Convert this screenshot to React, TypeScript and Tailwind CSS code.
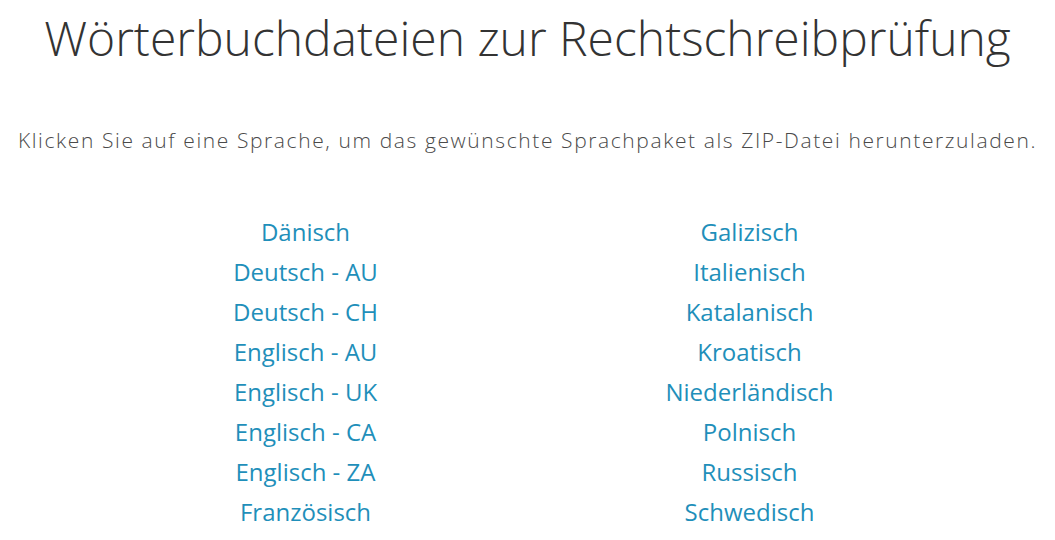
const left = [
  'Dänisch',
  'Deutsch - AU',
  'Deutsch - CH',
  'Englisch - AU',
  'Englisch - UK',
  'Englisch - CA',
  'Englisch - ZA',
  'Französisch',
];

const right = [
  'Galizisch',
  'Italienisch',
  'Katalanisch',
  'Kroatisch',
  'Niederländisch',
  'Polnisch',
  'Russisch',
  'Schwedisch',
];

function LinkColumn({ items }: { items: string[] }) {
  return (
    <ul className="flex flex-col items-center">
      {items.map((name) => (
        <li key={name} className="h-[40px] leading-[40px]">
          <a href="#" className="text-[24px] text-[#1f8fba] hover:underline">
            {name}
          </a>
        </li>
      ))}
    </ul>
  );
}

export default function App() {
  return (
    <div className="min-h-[540px] bg-white font-['Open_Sans',sans-serif]">
      <h1 className="pt-[6px] text-center text-[48px] font-light leading-[64px] text-[#333333]">
        Wörterbuchdateien zur Rechtschreibprüfung
      </h1>
      <p className="mt-[56px] text-center text-[21px] font-light leading-[28px] tracking-[1.6px] text-[#4a4a4a]">
        Klicken Sie auf eine Sprache, um das gewünschte Sprachpaket als ZIP-Datei herunterzuladen.
      </p>
      <div className="mx-auto mt-[58px] grid w-[888px] grid-cols-2">
        <LinkColumn items={left} />
        <LinkColumn items={right} />
      </div>
    </div>
  );
}
